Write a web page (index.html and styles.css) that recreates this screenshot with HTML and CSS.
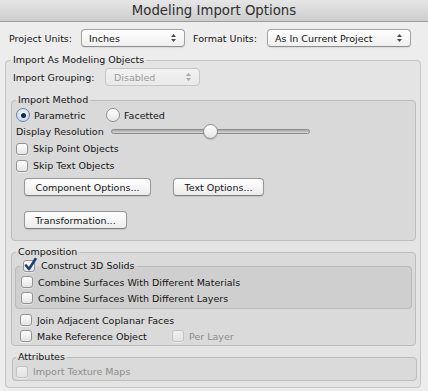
FILE: index.html
```html
<!DOCTYPE html>
<html lang="en">
<head>
  <meta charset="UTF-8" />
  <title>Modeling Import Options</title>
  <link rel="stylesheet" href="styles.css">
</head>
<body>
  <div class="titlebar">Modeling Import Options</div>

  <div class="units">
    <span class="units-label">Project Units:</span>
    <div class="popup popup-project">
      <span>Inches</span>
      <svg class="arrows" width="7" height="10" viewBox="0 0 7 10"><path d="M1 4 L3.5 1 L6 4 Z M1 6 L3.5 9 L6 6 Z"/></svg>
    </div>
    <span class="units-label format-label">Format Units:</span>
    <div class="popup popup-format">
      <span>As In Current Project</span>
      <svg class="arrows" width="7" height="10" viewBox="0 0 7 10"><path d="M1 4 L3.5 1 L6 4 Z M1 6 L3.5 9 L6 6 Z"/></svg>
    </div>
  </div>

  <fieldset class="group outer">
    <legend>Import As Modeling Objects</legend>

    <div class="grouping">
      <span class="grouping-label">Import Grouping:</span>
      <div class="popup popup-grouping disabled">
        <span>Disabled</span>
        <svg class="arrows" width="7" height="10" viewBox="0 0 7 10"><path d="M1 4 L3.5 1 L6 4 Z M1 6 L3.5 9 L6 6 Z"/></svg>
      </div>
    </div>

    <fieldset class="group method">
      <legend>Import Method</legend>
      <div class="radios">
        <label class="radio-item first"><span class="radio selected"></span>Parametric</label>
        <label class="radio-item"><span class="radio"></span>Facetted</label>
      </div>
      <div class="resolution">
        <span class="resolution-label">Display Resolution</span>
        <div class="slider"><div class="knob"></div></div>
      </div>
      <label class="check-row"><span class="box"></span>Skip Point Objects</label>
      <label class="check-row"><span class="box"></span>Skip Text Objects</label>
      <div class="btn-row">
        <button class="btn btn-component">Component Options...</button>
        <button class="btn btn-text">Text Options...</button>
      </div>
      <div class="btn-row second">
        <button class="btn btn-transform">Transformation...</button>
      </div>
    </fieldset>

    <fieldset class="group composition">
      <legend>Composition</legend>
      <fieldset class="group solids">
        <legend>
          <span class="box checked">
            <svg class="tick" width="14" height="15" viewBox="0 0 14 15"><path d="M3 8.5 L6 12 L12.5 2"/></svg>
          </span>Construct 3D Solids
        </legend>
        <label class="check-row inner"><span class="box"></span>Combine Surfaces With Different Materials</label>
        <label class="check-row inner"><span class="box"></span>Combine Surfaces With Different Layers</label>
      </fieldset>
      <label class="check-row comp first-comp"><span class="box"></span>Join Adjacent Coplanar Faces</label>
      <div class="check-row comp">
        <label class="reference"><span class="box"></span>Make Reference Object</label>
        <label class="disabled"><span class="box"></span>Per Layer</label>
      </div>
    </fieldset>

    <fieldset class="group attributes">
      <legend>Attributes</legend>
      <label class="check-row texture disabled"><span class="box"></span>Import Texture Maps</label>
    </fieldset>
  </fieldset>
</body>
</html>
```

FILE: styles.css
```css
* { box-sizing: border-box; }
body { margin: 0; width: 428px; height: 391px; overflow: hidden; background: #ededed; font-family: "DejaVu Sans", sans-serif; font-size: 9.5px; color: #141414; }

.titlebar { height: 22px; border-bottom: 1px solid #9c9c9c; background: linear-gradient(#e6e6e6, #cdcdcd); text-align: center; font-size: 13.3px; line-height: 21px; color: #2f2f2f; }

.units { display: flex; align-items: center; height: 18px; margin-top: 7px; padding-left: 9px; }
.units-label { width: 72px; }
.format-label { width: 74px; margin-left: 8px; }

.popup { position: relative; display: flex; align-items: center; height: 18px; padding-left: 7px; border: 1px solid #a3a3a3; border-bottom-color: #8e8e8e; border-radius: 4px; background: linear-gradient(#ffffff, #efefef); box-shadow: 0 1px 1px rgba(0,0,0,0.08); }
.popup .arrows { position: absolute; right: 7px; top: 3px; fill: #4a4a4a; }
.popup-project { width: 104px; }
.popup-format { width: 144px; }
.popup.disabled { color: #9a9a9a; border-color: #c6c6c6; background: linear-gradient(#f2f2f2, #e9e9e9); box-shadow: none; }
.popup.disabled .arrows { fill: #a8a8a8; }

.group { margin: 0; min-width: 0; border: 1px solid #bdbdbd; border-radius: 4px; }
.group > legend { padding: 0 2px; line-height: 14px; }

.outer { margin: 6px 0 0 5px; width: 416px; padding: 0 4px 6px 5px; background: #e4e4e4; border-color: #c4c4c4; }

.grouping { display: flex; align-items: center; height: 18px; margin-top: 1px; padding-left: 2px; }
.grouping-label { width: 92px; }
.popup-grouping { width: 95px; padding-left: 8px; }

.method { margin-top: 7px; padding: 0 4px 11px 4px; background: #d9d9d9; }

.radios { display: flex; align-items: center; height: 16px; }
.radio-item { display: flex; align-items: center; }
.radio-item.first { width: 90px; }
.radio { width: 14px; height: 14px; margin-right: 4px; border: 1px solid #8f8f8f; border-radius: 50%; background: linear-gradient(#ffffff, #e6e6e6); display: flex; align-items: center; justify-content: center; }
.radio.selected { border-color: #6f84a6; background: radial-gradient(circle at 50% 40%, #f4f8fd, #bccfe8); }
.radio.selected::after { content: ""; width: 5px; height: 5px; border-radius: 50%; background: #13294f; }

.resolution { display: flex; align-items: center; height: 17px; }
.resolution-label { width: 95px; }
.slider { position: relative; width: 199px; height: 5px; border: 1px solid #8c8c8c; border-radius: 3px; background: linear-gradient(#a6a6a6, #d8d8d8); }
.knob { position: absolute; left: 91px; top: -6px; width: 15px; height: 15px; border: 1px solid #8a8a8a; border-radius: 50%; background: linear-gradient(#ffffff, #e4e4e4); box-shadow: 0 1px 1px rgba(0,0,0,0.15); }

.check-row { display: flex; align-items: center; height: 17px; }
.check-row label { display: flex; align-items: center; }
.box { position: relative; display: inline-block; flex: none; width: 12px; height: 12px; margin-right: 5px; border: 1px solid #949494; border-radius: 3px; background: linear-gradient(#ffffff, #e4e4e4); box-shadow: 0 1px 0 rgba(255,255,255,0.5); }
.disabled { color: #8c8c8c; }
.disabled .box { border-color: #c2c2c2; background: linear-gradient(#f0f0f0, #e3e3e3); }

.btn-row { display: flex; margin-top: 4px; padding-left: 8px; }
.btn-row.second { margin-top: 15px; }
.btn { height: 18px; padding: 0; border: 1px solid #979797; border-bottom-color: #808080; border-radius: 4px; background: linear-gradient(#ffffff, #ececec); font-family: inherit; font-size: 9.5px; color: #141414; box-shadow: 0 1px 1px rgba(0,0,0,0.1); }
.btn-component { width: 127px; }
.btn-text { width: 91px; margin-left: 22px; }
.btn-transform { width: 103px; }

.composition { margin-top: 4px; padding: 0 4px 1px 4px; background: #dadada; }
.solids { margin: 0 -1px; padding: 0 4px 2px 4px; background: #cfcfcf; border-color: #b9b9b9; }
.solids > legend { display: flex; align-items: center; padding: 0 2px 0 3px; }
.solids > legend .box { margin-right: 6px; }
.tick { position: absolute; left: -1px; top: -4px; fill: none; stroke: #1d3f7a; stroke-width: 2.6; stroke-linecap: round; stroke-linejoin: round; }
.check-row.inner { height: 16px; padding-left: 1px; }
.check-row.inner:first-of-type { margin-top: 1px; }
.check-row.comp { height: 16px; padding-left: 4px; }
.check-row.first-comp { margin-top: 3px; }
.reference { width: 152px; }

.attributes { margin: 4px -1px 0 1px; padding: 0 4px 1px 3px; background: #dadada; }
.texture { height: 15px; }
```
